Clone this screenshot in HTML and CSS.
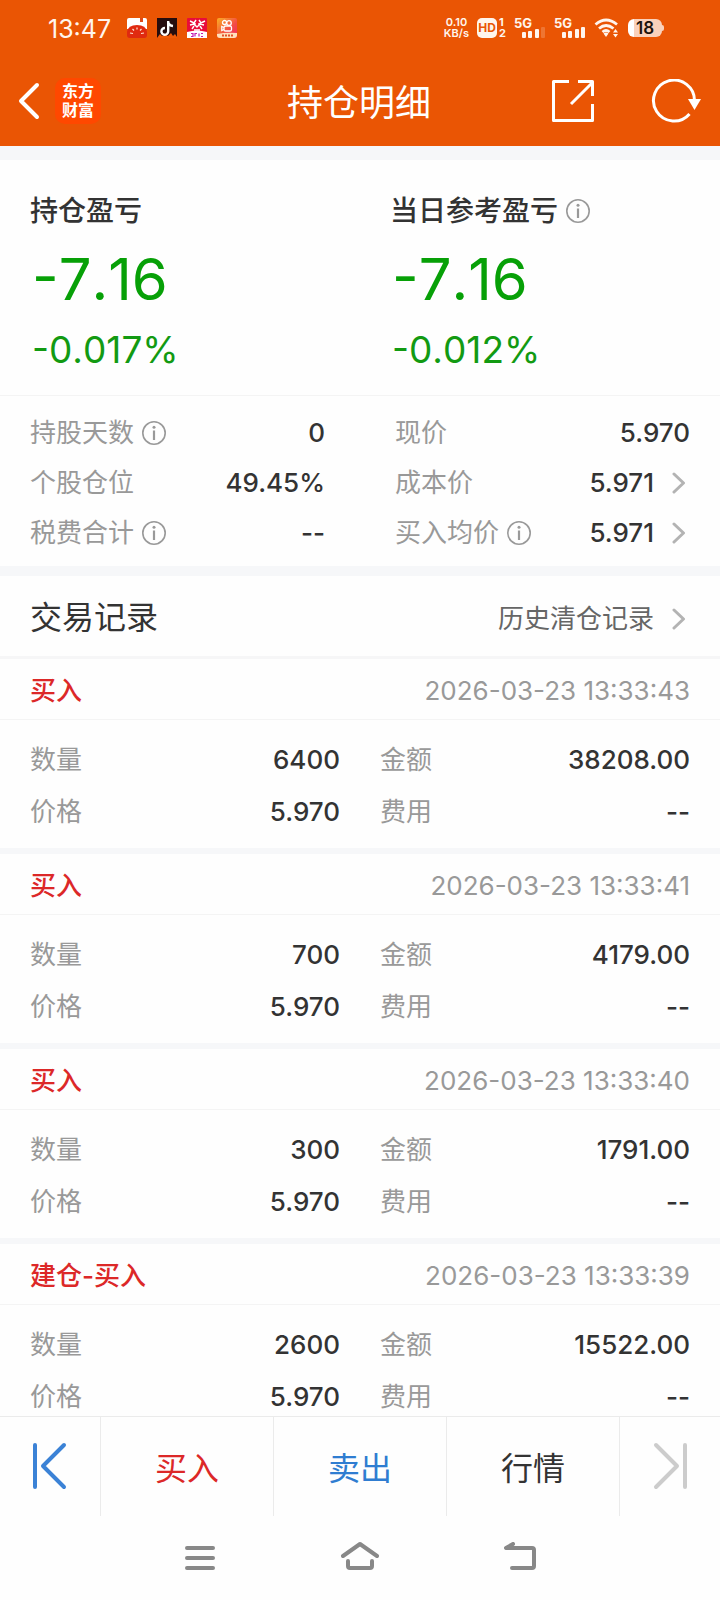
FILE: index.html
```html
<!DOCTYPE html>
<html lang="zh-CN">
<head>
<meta charset="utf-8">
<meta name="viewport" content="width=device-width, initial-scale=1">
<title>持仓明细</title>
<link rel="stylesheet" href="styles.css">
</head>
<body>
<svg class="symbols" aria-hidden="true">
  <symbol id="info" viewBox="0 0 24 24"><circle cx="12" cy="12" r="11.2" fill="none" stroke="#999" stroke-width="1.6"/><path d="M12 9.5V19" stroke="#999" stroke-width="2.2"/><circle cx="12" cy="6.2" r="1.5" fill="#999"/></symbol>
  <symbol id="chevron" viewBox="0 0 14 22"><path d="M2 2l9.500 9L2 20" fill="none" stroke="#b3b3b3" stroke-width="3" stroke-linecap="round" stroke-linejoin="round"/></symbol>
</svg>
<div class="app">
  <header class="top">
    <div class="status">
      <span class="clock">13:47</span>
      <div class="notices">
        <svg viewBox="0 0 20 20" width="20" height="20"><rect width="20" height="20" rx="3" fill="#e04a18"/><path d="M0 11V2q0-2 2-2h11v4h3V0h2q2 0 2 2v9z" fill="#fff"/><path d="M0 14Q1 7 10 7t10 7v3q0 3-3 3H3q-3 0-3-3z" fill="#e02a10"/><path d="M3 15l3 .5M5.500 11l1.500 1.500M10 9.500v2M14.500 11L13 12.500M17 15l-3 .5" stroke="#ffe9d8" stroke-width="1.200"/></svg>
        <svg viewBox="0 0 20 20" width="20" height="20"><rect width="20" height="20" fill="#260d0e"/><path d="M0 20l3-4 2 2 3-2 3 2 3-3 2 3 2-2 2 3v1z" fill="#f05a08"/><path d="M11.200 3v10.300A3.400 3.400 0 1 1 8 10M11.200 4q.6 3.500 4.800 4" fill="none" stroke="#fff" stroke-width="2.400"/></svg>
        <svg viewBox="0 0 20 20" width="20" height="20"><rect width="20" height="20" rx="1" fill="#e80d3a"/><path d="M3 3l4 2 2-3M12 2l2 3 4-2M3 7l4-1 3 3 3-3 4 1M5 11l2-3M15 11l-2-3M8 5v3M12 5v3M7 12h6" fill="none" stroke="#fff" stroke-width="1.400"/><path d="M0 14q10-3 20 0v6H0z" fill="#fff"/><path d="M4 15.500h2v3H4M8 18.500v-3h2M12 15.500v3M14 15.500h2M14 18.500h2" fill="none" stroke="#c51fb0" stroke-width="1.200"/></svg>
        <svg viewBox="0 0 20 20" width="20" height="20"><defs><linearGradient id="ks" x2="1" y2="1"><stop stop-color="#fbaf22"/><stop offset=".6" stop-color="#f34b46"/><stop offset="1" stop-color="#f22862"/></linearGradient></defs><rect width="20" height="20" rx="2" fill="url(#ks)"/><g fill="none" stroke="#fff" stroke-width="1.300"><circle cx="7.500" cy="4.500" r="2"/><circle cx="12" cy="5" r="2.300"/><rect x="7" y="8" width="7.500" height="5" rx="1.600"/><path d="M7 9.500L4.800 8.500v4L7 11.500"/></g><path d="M0 16q10-2 20-1v2q0 3-3 3H3q-3 0-3-3z" fill="#ffe1ba"/><path d="M5 17.500h11" stroke="#e0522a" stroke-width="2" stroke-dasharray="2 1"/></svg>
      </div>
      <div class="signals">
        <span class="speed"><span>0.10</span><span>KB/s</span></span>
        <span class="hd"><b>HD</b><span class="sims"><span>1</span><span>2</span></span></span>
        <span class="cell"><span>5G</span><svg viewBox="0 0 24 12" width="24" height="12" fill="#fff5ed"><rect y="6" width="4" height="6" rx="1"/><rect x="6" y="5" width="4" height="7" rx="1"/><rect x="13" y="3" width="4" height="9" rx="1"/><rect x="19" y="1" width="4" height="11" rx="1" opacity=".2"/></svg></span>
        <span class="cell"><span>5G</span><svg viewBox="0 0 24 12" width="24" height="12" fill="#fff5ed"><rect y="6" width="4" height="6" rx="1"/><rect x="6" y="5" width="4" height="7" rx="1"/><rect x="13" y="3" width="4" height="9" rx="1"/><rect x="19" y="1" width="4" height="11" rx="1"/></svg></span>
        <svg class="wifi" viewBox="0 0 26 20" width="26" height="20"><path d="M1.500 6.500Q12 -2.500 23 6.500M5 10.500q7-6 14.500 0M8.500 14q3.500-3 7 0" fill="none" stroke="#fff5ed" stroke-width="2.800"/><path d="M9.500 15.500q2.500-2 5 0L12 19z" fill="#fff5ed"/><path d="M19 14.500l2.500-3.500 2.500 3.500zM19 16l2.500 3.500L24 16z" fill="#fff5ed"/></svg>
        <span class="battery">18</span>
      </div>
    </div>
    <div class="titlebar">
      <div class="side">
        <button class="icon-btn" aria-label="返回"><svg viewBox="0 0 24 38" width="24" height="38"><path d="M20 3L4 19l16 16" fill="none" stroke="#fff" stroke-width="4" stroke-linecap="round" stroke-linejoin="round"/></svg></button>
        <span class="brand"><span>东方</span><span>财富</span></span>
      </div>
      <h1 class="title">持仓明细</h1>
      <div class="side side-end">
        <button class="icon-btn" aria-label="分享"><svg viewBox="0 0 44 44" width="44" height="44" fill="none" stroke="#fff" stroke-width="3" stroke-linejoin="round"><path d="M18 2.500H2.500v39h39V25M27 2.500h14.500V17M20 25L41 4"/></svg></button>
        <button class="icon-btn" aria-label="刷新"><svg viewBox="0 0 50 44" width="50" height="44"><path d="M38.500 35A20.500 20.500 0 1 1 43.500 22" fill="none" stroke="#fff" stroke-width="3"/><path d="M37 20h13l-6.500 11z" fill="#fff"/></svg></button>
      </div>
    </div>
  </header>

  <main class="content">
    <section class="summary">
      <div><h2 class="summary-label">持仓盈亏</h2><p class="profit">-7.16</p><p class="rate">-0.017%</p></div>
      <div><h2 class="summary-label">当日参考盈亏<svg class="info"><use href="#info"/></svg></h2><p class="profit">-7.16</p><p class="rate">-0.012%</p></div>
    </section>

    <dl class="metrics">
      <div class="row"><dt>持股天数<svg class="info"><use href="#info"/></svg></dt><dd>0</dd></div>
      <div class="row"><dt>现价</dt><dd>5.970</dd></div>
      <div class="row"><dt>个股仓位</dt><dd>49.45%</dd></div>
      <div class="row"><dt>成本价</dt><dd>5.971<svg class="chevron"><use href="#chevron"/></svg></dd></div>
      <div class="row"><dt>税费合计<svg class="info"><use href="#info"/></svg></dt><dd>--</dd></div>
      <div class="row"><dt>买入均价<svg class="info"><use href="#info"/></svg></dt><dd>5.971<svg class="chevron"><use href="#chevron"/></svg></dd></div>
    </dl>

    <section class="trades">
      <div class="trades-head"><h2>交易记录</h2><a href="#history">历史清仓记录<svg class="chevron"><use href="#chevron"/></svg></a></div>
      <article class="trade">
        <div class="trade-head"><h3>买入</h3><time>2026-03-23 13:33:43</time></div>
        <dl class="trade-body">
          <div class="row"><dt>数量</dt><dd>6400</dd></div><div class="row"><dt>金额</dt><dd>38208.00</dd></div>
          <div class="row"><dt>价格</dt><dd>5.970</dd></div><div class="row"><dt>费用</dt><dd>--</dd></div>
        </dl>
      </article>
      <article class="trade">
        <div class="trade-head"><h3>买入</h3><time>2026-03-23 13:33:41</time></div>
        <dl class="trade-body">
          <div class="row"><dt>数量</dt><dd>700</dd></div><div class="row"><dt>金额</dt><dd>4179.00</dd></div>
          <div class="row"><dt>价格</dt><dd>5.970</dd></div><div class="row"><dt>费用</dt><dd>--</dd></div>
        </dl>
      </article>
      <article class="trade">
        <div class="trade-head"><h3>买入</h3><time>2026-03-23 13:33:40</time></div>
        <dl class="trade-body">
          <div class="row"><dt>数量</dt><dd>300</dd></div><div class="row"><dt>金额</dt><dd>1791.00</dd></div>
          <div class="row"><dt>价格</dt><dd>5.970</dd></div><div class="row"><dt>费用</dt><dd>--</dd></div>
        </dl>
      </article>
      <article class="trade">
        <div class="trade-head"><h3>建仓-买入</h3><time>2026-03-23 13:33:39</time></div>
        <dl class="trade-body">
          <div class="row"><dt>数量</dt><dd>2600</dd></div><div class="row"><dt>金额</dt><dd>15522.00</dd></div>
          <div class="row"><dt>价格</dt><dd>5.970</dd></div><div class="row"><dt>费用</dt><dd>--</dd></div>
        </dl>
      </article>
    </section>
  </main>

  <footer>
    <div class="actions">
      <button class="step" aria-label="上一个"><svg viewBox="0 0 34 48" width="34" height="48" fill="none" stroke="#3b82d6" stroke-width="4" stroke-linecap="round" stroke-linejoin="round"><path d="M2 3v42M31 3L10 24l21 21"/></svg></button>
      <button class="buy">买入</button>
      <button class="sell">卖出</button>
      <button>行情</button>
      <button class="step" aria-label="下一个"><svg viewBox="0 0 34 48" width="34" height="48" fill="none" stroke="#ccc" stroke-width="4" stroke-linecap="round" stroke-linejoin="round"><path d="M32 3v42M3 3l21 21L3 45"/></svg></button>
    </div>
    <nav class="system">
      <button class="icon-btn" aria-label="最近任务"><svg viewBox="0 0 40 32" width="40" height="32"><path d="M7 6h26M7 16h26M7 26h26" stroke="#888" stroke-width="4" stroke-linecap="round"/></svg></button>
      <button class="icon-btn" aria-label="主屏幕"><svg viewBox="0 0 40 32" width="40" height="32" fill="none" stroke="#888" stroke-width="4" stroke-linecap="round" stroke-linejoin="round"><path d="M3 14L20 2l17 12M8 19v5q0 2 2 2h20q2 0 2-2v-5"/></svg></button>
      <button class="icon-btn" aria-label="返回上一页"><svg viewBox="0 0 40 32" width="40" height="32" fill="none" stroke="#888" stroke-width="4" stroke-linecap="round" stroke-linejoin="round"><path d="M13 2L6 6h26q2 0 2 2v16q0 2-2 2H12"/></svg></button>
    </nav>
  </footer>
</div>
</body>
</html>
```
FILE: styles.css
```css
* { box-sizing: border-box; margin: 0; padding: 0; }
body { background: #fefefe; color: #333; font-family: Inter, "Noto Sans CJK SC", sans-serif; font-size: 26px; line-height: 36px; }
button { background: none; border: 0; color: inherit; font: inherit; }
a { color: inherit; text-decoration: none; }
svg { display: block; flex: none; }
.symbols { position: absolute; width: 0; height: 0; }
.app { display: flex; flex-direction: column; height: 100vh; }

.top { flex: none; background: #ea5504; color: #fff; }
.status { display: flex; align-items: center; height: 58px; padding: 0 58px 2px 48px; color: #fff5ed; }
.clock { padding-top: 2px; font-size: 25px; }
.notices { display: flex; gap: 10px; margin-left: 16px; }
.signals { display: flex; align-items: center; margin-left: auto; gap: 8px; }
.speed { display: flex; flex-direction: column; align-items: center; font-size: 11px; line-height: 11px; font-weight: 600; }
.hd { display: flex; gap: 2px; align-items: center; }
.hd b { background: #fff5ed; color: #ea5504; border-radius: 5px; width: 20px; font-size: 12px; line-height: 20px; text-align: center; }
.sims { display: flex; flex-direction: column; font-size: 11px; line-height: 11px; font-weight: 700; }
.cell { display: flex; flex-direction: column; font-size: 13px; line-height: 10px; font-weight: 700; width: 32px; }
.cell svg { align-self: flex-end; margin-top: -2px; }
.battery { position: relative; width: 34px; border-radius: 6px; background: linear-gradient(90deg, #fff 18%, #fad1bb 18%); color: #1c120c; font-size: 17px; line-height: 18px; font-weight: 600; text-align: center; }
.battery::after { content: ""; position: absolute; right: -2px; top: 6px; width: 2px; height: 6px; border-radius: 0 2px 2px 0; background: #fad1bb; }
.titlebar { display: grid; grid-template-columns: 1fr auto 1fr; align-items: center; height: 88px; padding: 0 19px 2px 17px; }
.side { display: flex; align-items: center; gap: 14px; }
.side-end { justify-content: flex-end; gap: 56px; }
.title { padding-top: 4px; font-size: 36px; line-height: 48px; font-weight: 400; }
.brand { display: flex; flex-direction: column; justify-content: center; width: 46px; height: 46px; border-radius: 10px; background: #ff4800; font-size: 16px; line-height: 19px; font-weight: 700; text-align: center; }

.content { flex: 1; min-height: 0; overflow: hidden; border-top: 14px solid #f6f7f9; }
.summary { display: grid; grid-template-columns: 1fr 1fr; padding: 31px 0 20px 30px; column-gap: 30px; border-bottom: 1px solid #f4f4f4; }
.summary-label { display: flex; align-items: center; gap: 8px; font-size: 28px; line-height: 40px; font-weight: 500; }
.profit, .rate { padding-left: 2px; font-kerning: none; }
.profit { margin-top: 12px; font-size: 58px; line-height: 72px; color: #07a007; }
.rate { margin-top: 10px; font-size: 37px; line-height: 50px; color: #129a12; }
.info { width: 24px; height: 24px; }
.chevron { width: 14px; height: 22px; }

.metrics { display: grid; grid-template-columns: 1fr 1fr; column-gap: 70px; padding: 12px 30px 8px; border-bottom: 10px solid #f6f7f9; }
.row { display: flex; align-items: center; justify-content: space-between; height: 50px; }
dt { display: flex; align-items: center; gap: 8px; color: #999; }
dd { display: flex; align-items: center; gap: 18px; font-weight: 500; }
dd .chevron, .trades-head .chevron { margin-right: 4px; }

.trades-head { display: flex; align-items: center; justify-content: space-between; height: 83px; padding: 4px 30px 0; border-bottom: 3px solid #f6f6f7; }
.trades-head h2 { font-size: 32px; font-weight: 400; }
.trades-head a { display: flex; align-items: center; gap: 18px; padding-top: 2px; color: #666; }
.trade { border-bottom: 6px solid #f6f7f9; }
.trade-head { display: flex; align-items: center; justify-content: space-between; height: 61px; padding: 4px 30px 0; border-bottom: 1px solid #f4f4f4; }
.trade-head h3 { color: #dc2828; font-size: 26px; font-weight: 500; }
.trade-head time { color: #999; }
.trade-body { display: grid; grid-template-columns: 1fr 1fr; column-gap: 40px; padding: 14px 30px 10px; }
.trade-body .row { height: 52px; }

footer { flex: none; }
.actions { display: grid; grid-template-columns: 101px 1fr 1fr 1fr 100px; height: 100px; border-top: 1px solid #ebebeb; font-size: 32px; }
.actions button { display: flex; align-items: center; justify-content: center; padding-top: 4px; border-right: 1px solid #ebebeb; }
.actions .step { padding: 0 0 2px; }
.actions button:last-child { border-right: 0; }
.actions .buy { color: #dc2828; }
.actions .sell { color: #2f7dd1; }
.system { display: flex; align-items: center; justify-content: center; gap: 120px; height: 84px; }
```
